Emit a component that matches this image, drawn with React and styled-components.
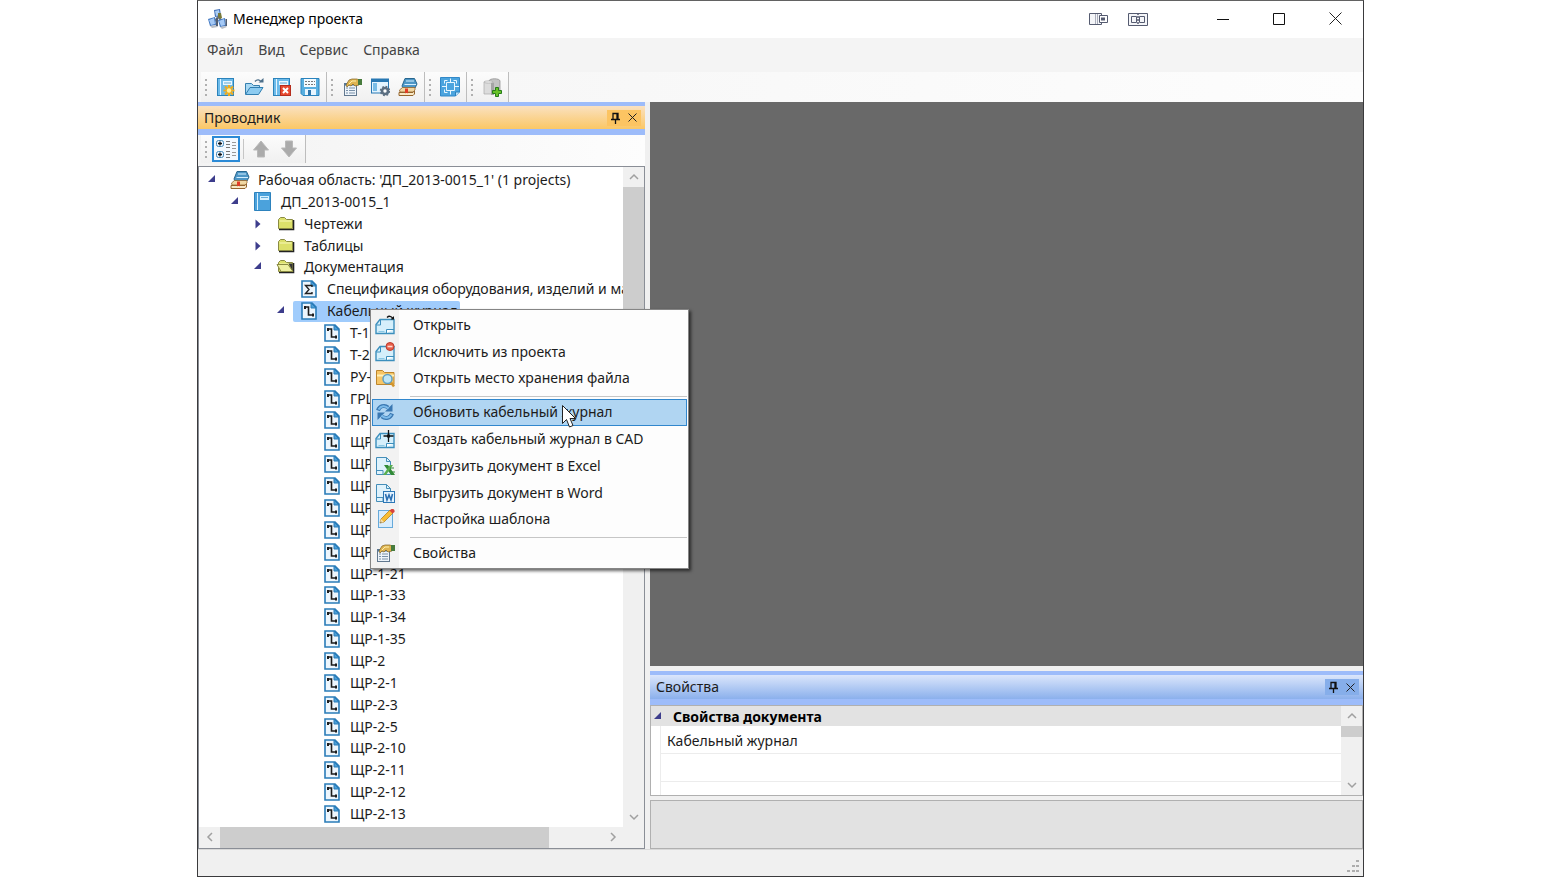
import React from "react";
import styled, { createGlobalStyle, css } from "styled-components";

const GlobalStyle = createGlobalStyle`
  *, *::before, *::after { box-sizing: border-box; }
  body {
    margin: 0;
    background: #fff;
    color: #1c1c1c;
    font-family: "Noto Sans", "Open Sans", sans-serif;
    font-size: 14px;
    line-height: 20px;
  }
  button {
    margin: 0;
    padding: 0;
    border: 0;
    background: none;
    color: inherit;
    font: inherit;
    display: flex;
    align-items: center;
    justify-content: center;
  }
  svg { display: block; flex: none; }
`;

/* ---------- frame ---------- */

const Desktop = styled.div`
  min-height: 100vh;
  padding: 0 196px 0 197px;
  display: flex;
`;

const AppWindow = styled.main`
  flex: 1;
  min-width: 0;
  display: flex;
  flex-direction: column;
  border: 1px solid #3a3a3c;
  border-top-color: #626262;
  background: #f0f0f0;
`;

const TitleBar = styled.header`
  height: 37px;
  display: flex;
  align-items: center;
  padding: 0 0 2px 10px;
  background: #fff;
`;

const Title = styled.h1`
  flex: 1;
  margin: 0 0 0 5px;
  font-size: 14px;
  font-weight: 400;
  color: #000;
`;

const TitleTools = styled.div`
  display: flex;
  margin-right: 37px;
`;

const TitleButton = styled.button`
  width: ${(p) => (p.$small ? 40 : 56)}px;
  height: 34px;
`;

const MenuBar = styled.nav`
  height: 34px;
  display: flex;
  align-items: center;
  gap: 15px;
  padding: 0 9px 11px;
  background: #f4f4f4;
  color: #444;
`;

const ToolStrip = styled.div`
  height: 30px;
  display: flex;
  padding-left: 3px;
  background: linear-gradient(90deg, #f5f5f5, #fdfdfd);
`;

const ToolGroup = styled.div`
  display: flex;
  align-items: center;
  padding-right: 2px;
  border-right: 1px solid #bdbdbd;
  background: linear-gradient(#fcfcfc, #f0f0f0);
`;

const Grip = styled.span`
  width: 2px;
  height: 17px;
  margin: 0 5px 0 4px;
  background: repeating-linear-gradient(#b0b0b0 0 2px, transparent 2px 5px);
`;

const ToolButton = styled.button`
  width: 28px;
  height: 26px;
  ${(p) =>
    p.$pressed &&
    css`
      border: 2px solid #2b8ad6;
      background: #f3f9ff;
    `}
`;

const Divider = styled.span`
  width: 1px;
  height: 20px;
  margin: 0 3px;
  background: #c6c6c6;
`;

const Workspace = styled.div`
  position: relative;
  flex: 1;
  display: flex;
  gap: 5px;
`;

const StatusBar = styled.footer`
  height: 27px;
  display: flex;
  align-items: flex-end;
  justify-content: flex-end;
  padding: 3px;
  border-top: 1px solid #d9d9d9;
  background: #f0f0f0;
`;

/* ---------- docked panels ---------- */

const Explorer = styled.section`
  width: 447px;
  flex: none;
  display: flex;
  flex-direction: column;
`;

const PanelHeader = styled.div`
  display: flex;
  align-items: center;
  justify-content: space-between;
  height: ${(p) => (p.$active ? 33 : 34)}px;
  padding: 0 4px 0 6px;
  border: solid #9dbcfa;
  border-width: 4px 0 6px;
  background: ${(p) =>
    p.$active
      ? "linear-gradient(#fae1c0, #fbc765)"
      : "linear-gradient(#dbe6fb, #8bb0ec)"};
`;

const PanelTitle = styled.h2`
  margin: 0;
  font-size: 14px;
  font-weight: 400;
`;

const PanelButtons = styled.div`
  display: flex;
  background: ${(p) => (p.$active ? "#fcc462" : "#86aeea")};
`;

const PanelButton = styled.button`
  width: 17px;
  height: 16px;
`;

const ExplorerTools = styled.div`
  height: 31px;
  display: flex;
  padding: 0 0 3px 3px;
  background: linear-gradient(90deg, #f3f3f3, #fdfdfd);
`;

const TreeBox = styled.div`
  flex: 1;
  display: grid;
  grid-template-columns: minmax(0, 1fr) 21px;
  grid-template-rows: 1fr 21px;
  border: 1px solid #8a8e96;
  background: #f0f0f0;
`;

const Tree = styled.ul`
  margin: 0;
  padding: 2px 0;
  list-style: none;
  display: grid;
  grid-auto-rows: minmax(21px, 1fr);
  overflow: hidden;
  background: #fff;
`;

const TreeRow = styled.li`
  display: flex;
  align-items: center;
  padding-left: ${(p) => p.$level * 23}px;
  white-space: nowrap;
`;

const Expander = styled.span`
  width: 25px;
  flex: none;
  display: flex;
  justify-content: center;
`;

const TreeLabel = styled.span`
  height: 21px;
  display: flex;
  align-items: center;
  gap: 8px;
  padding: 0 2px 0 6px;
  border-radius: 2px;
  background: ${(p) => (p.$selected ? "#a0ccfc" : "transparent")};
`;

const ScrollBar = styled.div`
  display: flex;
  flex-direction: ${(p) => (p.$horizontal ? "row" : "column")};
  background: #f0f0f0;
`;

const ScrollButton = styled.button`
  width: 21px;
  height: 20px;
  flex: none;
`;

const Track = styled.div`
  flex: 1;
  display: flex;
  flex-direction: ${(p) => (p.$horizontal ? "row" : "column")};
`;

const Thumb = styled.div`
  flex: 0 0 ${(p) => p.$size};
  background: #cdcdcd;
`;

const RightSide = styled.div`
  flex: 1;
  min-width: 0;
  display: flex;
  flex-direction: column;
`;

const Canvas = styled.div`
  flex: 1;
  margin-bottom: 5px;
  background: #696969;
`;

const PropertyBox = styled.div`
  height: 91px;
  display: flex;
  border: 1px solid #b0b0b0;
`;

const PropertyGrid = styled.div`
  flex: 1;
  display: flex;
  flex-direction: column;
  overflow: hidden;
  background: #fff;
`;

const Category = styled.h3`
  height: 20px;
  flex: none;
  display: flex;
  align-items: center;
  gap: 11px;
  margin: 0;
  padding: 2px 0 0 3px;
  font-size: 14px;
  font-weight: 700;
  background: #e2e2e2;
  color: #000;
`;

const PropertyRow = styled.div`
  height: 28px;
  flex: none;
  margin-left: 9px;
  padding: 5px 6px;
  border: solid #ececec;
  border-width: 0 0 1px 1px;
`;

const HelpBox = styled.div`
  height: 49px;
  margin-top: 4px;
  border: 1px solid #b0b0b0;
  background: #e2e2e2;
`;

/* ---------- context menu ---------- */

const ContextMenu = styled.div`
  position: absolute;
  left: 172px;
  top: 207px;
  width: 319px;
  height: 260px;
  display: flex;
  flex-direction: column;
  padding: 2px 1px 1px;
  border: 1px solid #858585;
  background: linear-gradient(90deg, #f2f2f2 28px, #fdfdfd 28px);
  box-shadow: 2px 2px 3px rgba(0, 0, 0, 0.6);
`;

const MenuItem = styled.button`
  flex: 1;
  justify-content: flex-start;
  gap: 18px;
  padding: 0 2px 1px;
  border: 1px solid ${(p) => (p.$hot ? "#3187cd" : "transparent")};
  background: ${(p) => (p.$hot ? "#b0d5f2" : "none")};
  color: #1c1c1c;
`;

const MenuRule = styled.hr`
  width: auto;
  height: 7px;
  flex: none;
  margin: 0 0 0 38px;
  border: 0;
  background: linear-gradient(#c6c6c6, #c6c6c6) 0 4px / 100% 1px no-repeat;
`;

const Pointer = styled.div`
  position: absolute;
  left: 363px;
  top: 302px;
`;

/* ---------- drawings ---------- */

const Svg = ({ w = 20, h = 20, children }) => (
  <svg width={w} height={h} viewBox={`0 0 ${w} ${h}`} fill="none" aria-hidden="true">
    {children}
  </svg>
);

const AppIcon = () => (
  <Svg>
    <path d="M6 13l4-5 5 5" stroke="#6b7280" strokeWidth="2" />
    <path d="M6 1l6-1 1 7-6 1z" fill="#426fb5" />
    <path d="M7 2l4-1 1 5-4 1z" fill="#a9ccf4" />
    <path d="M10 4h3l1 5-2 1-2-2z" fill="#77793a" />
    <path d="M0 10l7-2 1 8-6 1z" fill="#4379c2" />
    <path d="M1 11l5-2 1 6-4 1z" fill="#a5c9f5" />
    <path d="M10 11l7-2 1 8-6 1z" fill="#4379c2" />
    <path d="M11 12l5-2 1 6-4 1z" fill="#a5c9f5" />
    <path d="M2 17l7-1 1 2-6 1zM12 18l6-1 1 1-5 2z" fill="#b9bec6" />
    <path d="M8 9h2v8H8zM17.500 10h1.500v7h-1.500z" fill="#515d70" />
  </Svg>
);

const Book = () => (
  <>
    <rect x="1.500" y="1.500" width="16" height="17" fill="#6dbbea" stroke="#2b83bb" />
    <path d="M4.500 2v16" stroke="#e3f4ff" />
    <rect x="7" y="4" width="9" height="4" fill="#e9f7ff" />
    <path d="M8 6h7" stroke="#63a9d2" />
  </>
);

const NewProject = () => (
  <Svg>
    <Book />
    <path d="M13 8v11M7.500 13.500h11M9 9.500l8 8m0-8l-8 8" stroke="#f0ac1c" strokeWidth="2.200" />
    <circle cx="13" cy="13.500" r="2.200" fill="#fff0a0" />
  </Svg>
);

const OpenProject = () => (
  <Svg>
    <path d="M1.500 17V6.500h6l2 2h6V11" fill="#a8d8f3" stroke="#357fae" />
    <path d="M1.500 17.500L6 10.500h13l-4.500 7z" fill="#8ccbf0" stroke="#307eb0" />
    <path d="M11 4.500c2-2.500 5-2 6 .5" stroke="#4c6f8a" strokeWidth="1.300" />
    <path d="M14.500 5.500h5V1z" fill="#4c6f8a" />
  </Svg>
);

const CloseProject = () => (
  <Svg>
    <Book />
    <rect x="8.500" y="8.500" width="10" height="10" fill="#e8492f" stroke="#b52d1d" />
    <path d="M11 11l5 5m0-5l-5 5" stroke="#fff" strokeWidth="2" />
  </Svg>
);

const Save = () => (
  <Svg>
    <path d="M1 1.500h18v17H3l-2-2z" fill="#58afe0" stroke="#2a83bd" />
    <path d="M4 2h12v8H4z" fill="#f4fbff" />
    <path d="M5 4.500h10M5 7.500h10" stroke="#777" strokeDasharray="2 1" />
    <path d="M5 12h11v6H5z" fill="#e8f6ff" />
    <path d="M8 13h3v5H8z" fill="#2f76ac" />
  </Svg>
);

const Properties = () => (
  <Svg>
    <rect x="2.500" y="6.500" width="12" height="12" fill="#eef4fa" stroke="#61788f" />
    <path d="M3 7.500h11" stroke="#4777a8" strokeWidth="2" />
    <path d="M4 11h2m1 0h6M4 13.500h2m1 0h6M4 16h2m1 0h6" stroke="#7890a8" />
    <path d="M4 8l3-5 3-1h5l2 1v5l-4 1-2-2-2 2-2-1-2 2z" fill="#dfb451" stroke="#806124" strokeWidth=".7" />
    <path d="M7 7l3-3h4" stroke="#fff0ac" />
    <path d="M16 2h4v6h-4z" fill="#477b3d" />
  </Svg>
);

const Settings = () => (
  <Svg>
    <rect x="1.500" y="2" width="17" height="14" fill="#e3f4ff" stroke="#2878b3" />
    <path d="M1 3.500h18" stroke="#2878b3" strokeWidth="3" />
    <path d="M3 6h4v8H3z" fill="#79bde7" />
    <circle cx="15" cy="14" r="3" stroke="#5c6f81" strokeWidth="2.600" fill="#fff" />
    <circle cx="15" cy="14" r="4.500" stroke="#5c6f81" strokeWidth="1.500" strokeDasharray="1.800 1.740" />
  </Svg>
);

const Books = () => (
  <Svg>
    <path d="M4 9l3-7.500h9.500l2.500 5.500-2 4H5z" fill="#4d96c6" stroke="#28678f" />
    <path d="M8 4h8M6.500 7.500H18" stroke="#d4efff" strokeWidth="1.200" />
    <path d="M1.500 13l3-2.500H17v2.500l-2 2H2z" fill="#f0d7a2" stroke="#94652d" strokeWidth=".8" />
    <path d="M1 15.500h14l1.500-1.500v3L15 18.500H1z" fill="#f8e9c7" stroke="#94652d" />
    <path d="M10 11.500v5l-1.500-1-1.500 1v-5z" fill="#e43b26" />
  </Svg>
);

const CadSheet = () => (
  <Svg>
    <path d="M.5.5h19v14.500l-4 4H.5z" fill="#4ba4de" stroke="#3289c9" />
    <path d="M15.500 19v-4h4" fill="#bde4fc" stroke="#2980bd" />
    <path d="M6.500 5.500h8v8h-8zM10.500 1.500v4m0 8v4M2 9.500h4.500m8 0H19M4.500 3.500v3m12-3v3m-12 6v3M4.500 3.500h3m6 0h3m-12 12h3" stroke="#e8f7ff" />
  </Svg>
);

const AddDatabase = () => (
  <Svg>
    <path d="M7 4c0-3 11-3 11 0v10H7z" fill="#c3c3c3" stroke="#8b8b8b" strokeWidth=".7" />
    <path d="M2 5h9v12H2z" fill="#dcdcdc" stroke="#aaa" strokeWidth=".7" />
    <path d="M2 5c0-1.500 9-1.500 9 0s-9 1.500-9 0z" fill="#ececec" stroke="#aaa" strokeWidth=".7" />
    <path d="M9 6v12h3V6z" fill="#a4a4a4" />
    <path d="M13.500 10.500h3v3h3v3h-3v3h-3v-3h-3v-3h3z" fill="#68c227" stroke="#267c19" />
  </Svg>
);

const GroupList = () => (
  <Svg w={22}>
    <rect x="1.500" y="1.500" width="7" height="6" rx="2" fill="#eaf5ff" stroke="#468aba" />
    <rect x="1.500" y="12.500" width="7" height="6" rx="2" fill="#eaf5ff" stroke="#468aba" />
    <path d="M3 4.500h4m-2-2v4M3 15.500h4m-2-2v4" stroke="#111" strokeWidth="1.300" />
    <path d="M11 2.500h4M11 5.500h4M11 8.500h4M11 12.500h4M11 15.500h4M11 18.500h4" stroke="#777" />
    <path d="M17 3.500h4M17 6.500h4M17 9.500h4M17 13.500h4M17 16.500h4" stroke="#999" />
  </Svg>
);

const Arrow = ({ down }) => (
  <Svg>
    <path
      d={down ? "M6.500 2h7v7h4L10 18 2.500 9h4z" : "M6.500 18h7v-7h4L10 2l-7.500 9h4z"}
      fill="#ababab"
      stroke="#b9b9b9"
    />
  </Svg>
);

const ProjectBook = () => (
  <Svg>
    <path d="M1.500.5h16v18h-16z" fill="#4ba2dc" stroke="#2d82bd" />
    <path d="M4.500 1v17" stroke="#d8f1ff" />
    <path d="M7 4h9v4H7z" fill="#d8f1ff" />
    <path d="M8 5.500h7" stroke="#67aeda" />
  </Svg>
);

const Folder = ({ open }) => (
  <Svg>
    <path d="M3 15.500h14.500V6" stroke="#222" strokeWidth="1.600" />
    <path d="M2.500 14.500v-9l2-2h4l2 2h6v9z" fill="#dce06a" stroke="#8a8b43" />
    <path d="M3.500 7h12" stroke="#f7f8b8" />
    {open && <path d="M5 14.500L1 7.500h11l5 7z" fill="#eef0a0" stroke="#8a8b43" />}
    {open && <path d="M12.500 6.500l4 7V6.500z" fill="#333" />}
  </Svg>
);

const SheetBase = ({ children }) => (
  <Svg>
    <path d="M3 2h10l4 4v12H3z" fill="#edf6fd" stroke="#2a7cb8" strokeWidth="1.600" />
    <path d="M12 2v5h5z" fill="#4a9fd8" stroke="#2a7cb8" />
    {children}
  </Svg>
);

const SumSheet = () => (
  <SheetBase>
    <path d="M13 8V6.500H6.500L10 10.500l-3.500 4H13V13" stroke="#222" strokeWidth="1.400" />
  </SheetBase>
);

const CableSheet = () => (
  <SheetBase>
    <path d="M5 6h4.500v8H14" stroke="#1d1d1d" strokeWidth="1.600" />
    <path d="M5 5h2v3H5zM13 12.500h2v3h-2z" fill="#1d1d1d" />
  </SheetBase>
);

const DrawingBase = () => (
  <>
    <path d="M1 18.500V9.500l4-5h14v14z" fill="#d5effb" stroke="#3c8fbd" strokeWidth="1.400" />
    <path d="M1.500 10h4V4.500" stroke="#3c8fbd" />
    <path d="M11.500 18v-3.500H19" fill="#fff" stroke="#3c8fbd" />
    <path d="M3.500 16.500h6" stroke="#8ac8e5" />
  </>
);

const OpenDoc = () => (
  <Svg>
    <DrawingBase />
    <path d="M12 2.500c2-2 4-1.500 6 1" stroke="#111" strokeWidth="1.300" />
    <path d="M15.500 4.500H19V1z" fill="#111" />
  </Svg>
);

const ExcludeDoc = () => (
  <Svg>
    <DrawingBase />
    <circle cx="15" cy="4.500" r="4" fill="#e95e48" stroke="#bd3c2f" />
    <path d="M12.500 4.500h5" stroke="#ffd8cf" strokeWidth="1.600" />
  </Svg>
);

const FindFolder = () => (
  <Svg>
    <path d="M1.500 16.500v-14h6l2 2h9.500v12z" fill="#f6c566" stroke="#bd852b" />
    <path d="M2 7.500h17" stroke="#fff0b8" strokeWidth="2" />
    <circle cx="12.500" cy="11" r="4.500" fill="#bde5f6" stroke="#619fc0" strokeWidth="1.500" />
    <path d="M16 14.500l3 4" stroke="#d2952c" strokeWidth="2.500" />
  </Svg>
);

const Refresh = () => (
  <Svg>
    <path d="M3 8.500C4.500 4 9.500 2.500 13 5.500" stroke="#3a78b2" strokeWidth="4" />
    <path d="M17.500 2v7.500H10z" fill="#3a78b2" />
    <path d="M17 11.500c-1.500 4.500-6.500 6-10 3" stroke="#3a78b2" strokeWidth="4" />
    <path d="M2.500 18v-7.500H10z" fill="#3a78b2" />
    <path d="M3.500 7.500C6 3.500 10 3 13.500 6.500M16.500 12.500c-2.500 4-6.500 4.500-10 1" stroke="#7dbbea" strokeWidth="2" />
  </Svg>
);

const CreateCad = () => (
  <Svg>
    <DrawingBase />
    <path d="M13.500 1v12M8.500 7h10" stroke="#111" strokeWidth="1.300" />
    <rect x="12" y="5.500" width="3" height="3" fill="#111" />
  </Svg>
);

const ExportBase = () => (
  <>
    <path d="M1.500 1.500h10l4 4v13h-14z" fill="#dff2fc" stroke="#458eb9" />
    <path d="M11.500 1.500v4h4M2 14.500h6v4" stroke="#458eb9" />
  </>
);

const ExportExcel = () => (
  <Svg>
    <ExportBase />
    <path d="M9 9h4l7 10h-4z" fill="#318a36" />
    <path d="M18 9h-3l-7 10h3z" fill="#59ae50" />
    <path d="M15 12h4M16 16h4" stroke="#318a36" />
  </Svg>
);

const ExportWord = () => (
  <Svg>
    <ExportBase />
    <rect x="8.500" y="8.500" width="11" height="11" fill="#e3f3ff" stroke="#2c77b6" />
    <path d="M10.500 11l1.500 6 2-5 2 5 1.500-6" stroke="#2c70b3" strokeWidth="1.600" />
  </Svg>
);

const Template = () => (
  <Svg>
    <rect x="3.500" y="1.500" width="14" height="17" fill="#d9edfd" stroke="#66aadb" />
    <path d="M5 14l1-4L15 1l3 3-9 9z" fill="#f7bd35" stroke="#b38026" strokeWidth=".8" />
    <path d="M5 14l1-4 3 3z" fill="#f7e1b0" />
    <path d="M14.500 1.500l3 3 2-1.500c.5-2-1-3.500-3-3z" fill="#d8423b" />
    <path d="M5 14l1-1.500.7.700z" fill="#333" />
  </Svg>
);

const Pin = () => (
  <Svg w={11} h={12}>
    <path d="M3 7V1.500h5V7M1 7.500h9M5.500 8v4M7 2v5" stroke="#111" strokeWidth="1.300" />
  </Svg>
);

const Cross = ({ size = 9 }) => (
  <Svg w={size} h={size}>
    <path d={`M.5.5l${size - 1} ${size - 1}m0-${size - 1}l-${size - 1} ${size - 1}`} stroke="#222" />
  </Svg>
);

const chevrons = {
  up: "M1 7l4-4 4 4",
  down: "M1 3l4 4 4-4",
  left: "M7 1L3 5l4 4",
  right: "M3 1l4 4-4 4",
};

const Chevron = ({ dir }) => (
  <Svg w={10} h={10}>
    <path d={chevrons[dir]} stroke="#a0a0a0" strokeWidth="1.500" />
  </Svg>
);

const Triangle = ({ open }) => (
  <Svg w={8} h={10}>
    <path d={open ? "M7 0v7H0z" : "M1.500.5v9L6.500 5z"} fill="#3d3d8c" />
  </Svg>
);

/* ---------- content ---------- */

const toolGroups = [
  [
    ["Новый проект", NewProject],
    ["Открыть проект", OpenProject],
    ["Закрыть проект", CloseProject],
    ["Сохранить", Save],
  ],
  [
    ["Свойства", Properties],
    ["Настройки", Settings],
    ["Рабочая область", Books],
  ],
  [["Чертёж", CadSheet]],
  [["Добавить базу данных", AddDatabase]],
];

const cables = [
  "Т-1", "Т-2", "РУ-1", "ГРЩ", "ПР-1", "ЩР-1", "ЩР-1-1", "ЩР-1-2", "ЩР-1-3", "ЩР-1-4", "ЩР-1-5",
  "ЩР-1-21", "ЩР-1-33", "ЩР-1-34", "ЩР-1-35", "ЩР-2", "ЩР-2-1", "ЩР-2-3", "ЩР-2-5",
  "ЩР-2-10", "ЩР-2-11", "ЩР-2-12", "ЩР-2-13",
];

const treeRows = [
  { level: 0, state: "open", Icon: Books, text: "Рабочая область: 'ДП_2013-0015_1' (1 projects)" },
  { level: 1, state: "open", Icon: ProjectBook, text: "ДП_2013-0015_1" },
  { level: 2, state: "closed", Icon: Folder, text: "Чертежи" },
  { level: 2, state: "closed", Icon: Folder, text: "Таблицы" },
  { level: 2, state: "open", Icon: () => <Folder open />, text: "Документация" },
  { level: 3, Icon: SumSheet, text: "Спецификация оборудования, изделий и материалов" },
  { level: 3, state: "open", Icon: CableSheet, text: "Кабельный журнал", selected: true },
  ...cables.map((text) => ({ level: 4, Icon: CableSheet, text })),
];

const menuSections = [
  [
    ["Открыть", OpenDoc],
    ["Исключить из проекта", ExcludeDoc],
    ["Открыть место хранения файла", FindFolder],
  ],
  [
    ["Обновить кабельный журнал", Refresh, true],
    ["Создать кабельный журнал в CAD", CreateCad],
    ["Выгрузить документ в Excel", ExportExcel],
    ["Выгрузить документ в Word", ExportWord],
    ["Настройка шаблона", Template],
  ],
  [["Свойства", Properties]],
];

const Header = ({ title, active }) => (
  <PanelHeader $active={active}>
    <PanelTitle>{title}</PanelTitle>
    <PanelButtons $active={active}>
      <PanelButton aria-label="Закрепить"><Pin /></PanelButton>
      <PanelButton aria-label="Закрыть"><Cross /></PanelButton>
    </PanelButtons>
  </PanelHeader>
);

const Scroll = ({ horizontal, size }) => (
  <ScrollBar $horizontal={horizontal}>
    <ScrollButton aria-label="Назад"><Chevron dir={horizontal ? "left" : "up"} /></ScrollButton>
    <Track $horizontal={horizontal}><Thumb $size={size} /></Track>
    <ScrollButton aria-label="Вперёд"><Chevron dir={horizontal ? "right" : "down"} /></ScrollButton>
  </ScrollBar>
);

export default function App() {
  return (
    <Desktop>
      <GlobalStyle />
      <AppWindow>
        <TitleBar>
          <AppIcon />
          <Title>Менеджер проекта</Title>
          <TitleTools>
            <TitleButton $small aria-label="Показать на экране">
              <Svg>
                <path d="M1.500 4.500h12v11h-12z" fill="#f4f5f8" stroke="#555b70" />
                <path d="M7.500 5v10M9.500 5v10" stroke="#aaaebb" />
                <path d="M11.500 6.500h8v7h-8z" fill="#fff" stroke="#555b70" />
                <path d="M13 10h4" stroke="#555b70" strokeWidth="3" />
              </Svg>
            </TitleButton>
            <TitleButton $small aria-label="Разделить экран">
              <Svg>
                <path d="M.5 4.500h19v12H.5z" fill="#f4f5f8" stroke="#555b70" />
                <path d="M3.500 7.500h5v6h-5zM11.500 7.500h5v6h-5z" stroke="#555b70" />
                <path d="M10 4v13" stroke="#555b70" strokeWidth="1.500" strokeDasharray="2 1" />
              </Svg>
            </TitleButton>
          </TitleTools>
          <TitleButton aria-label="Свернуть">
            <Svg w={12} h={12}><path d="M0 6.500h12" stroke="#111" /></Svg>
          </TitleButton>
          <TitleButton aria-label="Развернуть">
            <Svg w={12} h={12}><path d="M.5.5h11v11H.5z" stroke="#111" /></Svg>
          </TitleButton>
          <TitleButton aria-label="Закрыть"><Cross size={13} /></TitleButton>
        </TitleBar>

        <MenuBar>
          {["Файл", "Вид", "Сервис", "Справка"].map((m) => <button key={m}>{m}</button>)}
        </MenuBar>

        <ToolStrip>
          {toolGroups.map((group, i) => (
            <ToolGroup key={i}>
              <Grip />
              {group.map(([name, Icon]) => (
                <ToolButton key={name} aria-label={name}><Icon /></ToolButton>
              ))}
            </ToolGroup>
          ))}
        </ToolStrip>

        <Workspace>
          <Explorer>
            <Header title="Проводник" active />
            <ExplorerTools>
              <ToolGroup>
                <Grip />
                <ToolButton $pressed aria-label="Группировка"><GroupList /></ToolButton>
                <Divider />
                <ToolButton aria-label="Вверх"><Arrow /></ToolButton>
                <ToolButton aria-label="Вниз"><Arrow down /></ToolButton>
              </ToolGroup>
            </ExplorerTools>
            <TreeBox>
              <Tree role="tree">
                {treeRows.map(({ level, state, Icon, text, selected }) => (
                  <TreeRow key={text} role="treeitem" aria-selected={!!selected} $level={level}>
                    <Expander>{state && <Triangle open={state === "open"} />}</Expander>
                    <TreeLabel $selected={selected}><Icon />{text}</TreeLabel>
                  </TreeRow>
                ))}
              </Tree>
              <Scroll size="45%" />
              <Scroll horizontal size="86%" />
            </TreeBox>
          </Explorer>

          <RightSide>
            <Canvas />
            <Header title="Свойства" />
            <PropertyBox>
              <PropertyGrid>
                <Category><Triangle open />Свойства документа</Category>
                <PropertyRow>Кабельный журнал</PropertyRow>
                <PropertyRow />
                <PropertyRow />
              </PropertyGrid>
              <Scroll size="22%" />
            </PropertyBox>
            <HelpBox />
          </RightSide>

          <ContextMenu role="menu">
            {menuSections.map((section, i) => (
              <React.Fragment key={i}>
                {i > 0 && <MenuRule />}
                {section.map(([name, Icon, hot]) => (
                  <MenuItem key={name} role="menuitem" $hot={hot}><Icon />{name}</MenuItem>
                ))}
              </React.Fragment>
            ))}
          </ContextMenu>
          <Pointer>
            <Svg w={16} h={25}>
              <path d="M1.500 1.500v18l4-4 3 7.500 3.500-1.500-3-7h5.500z" fill="#fff" stroke="#222" />
            </Svg>
          </Pointer>
        </Workspace>

        <StatusBar>
          <Svg w={14} h={14}>
            <path d="M10 1h3v2h-3zM6 6h3v2H6zM10 6h3v2h-3zM1 11h3v2H1zM6 11h3v2H6zM10 11h3v2h-3z" fill="#adadad" />
          </Svg>
        </StatusBar>
      </AppWindow>
    </Desktop>
  );
}
